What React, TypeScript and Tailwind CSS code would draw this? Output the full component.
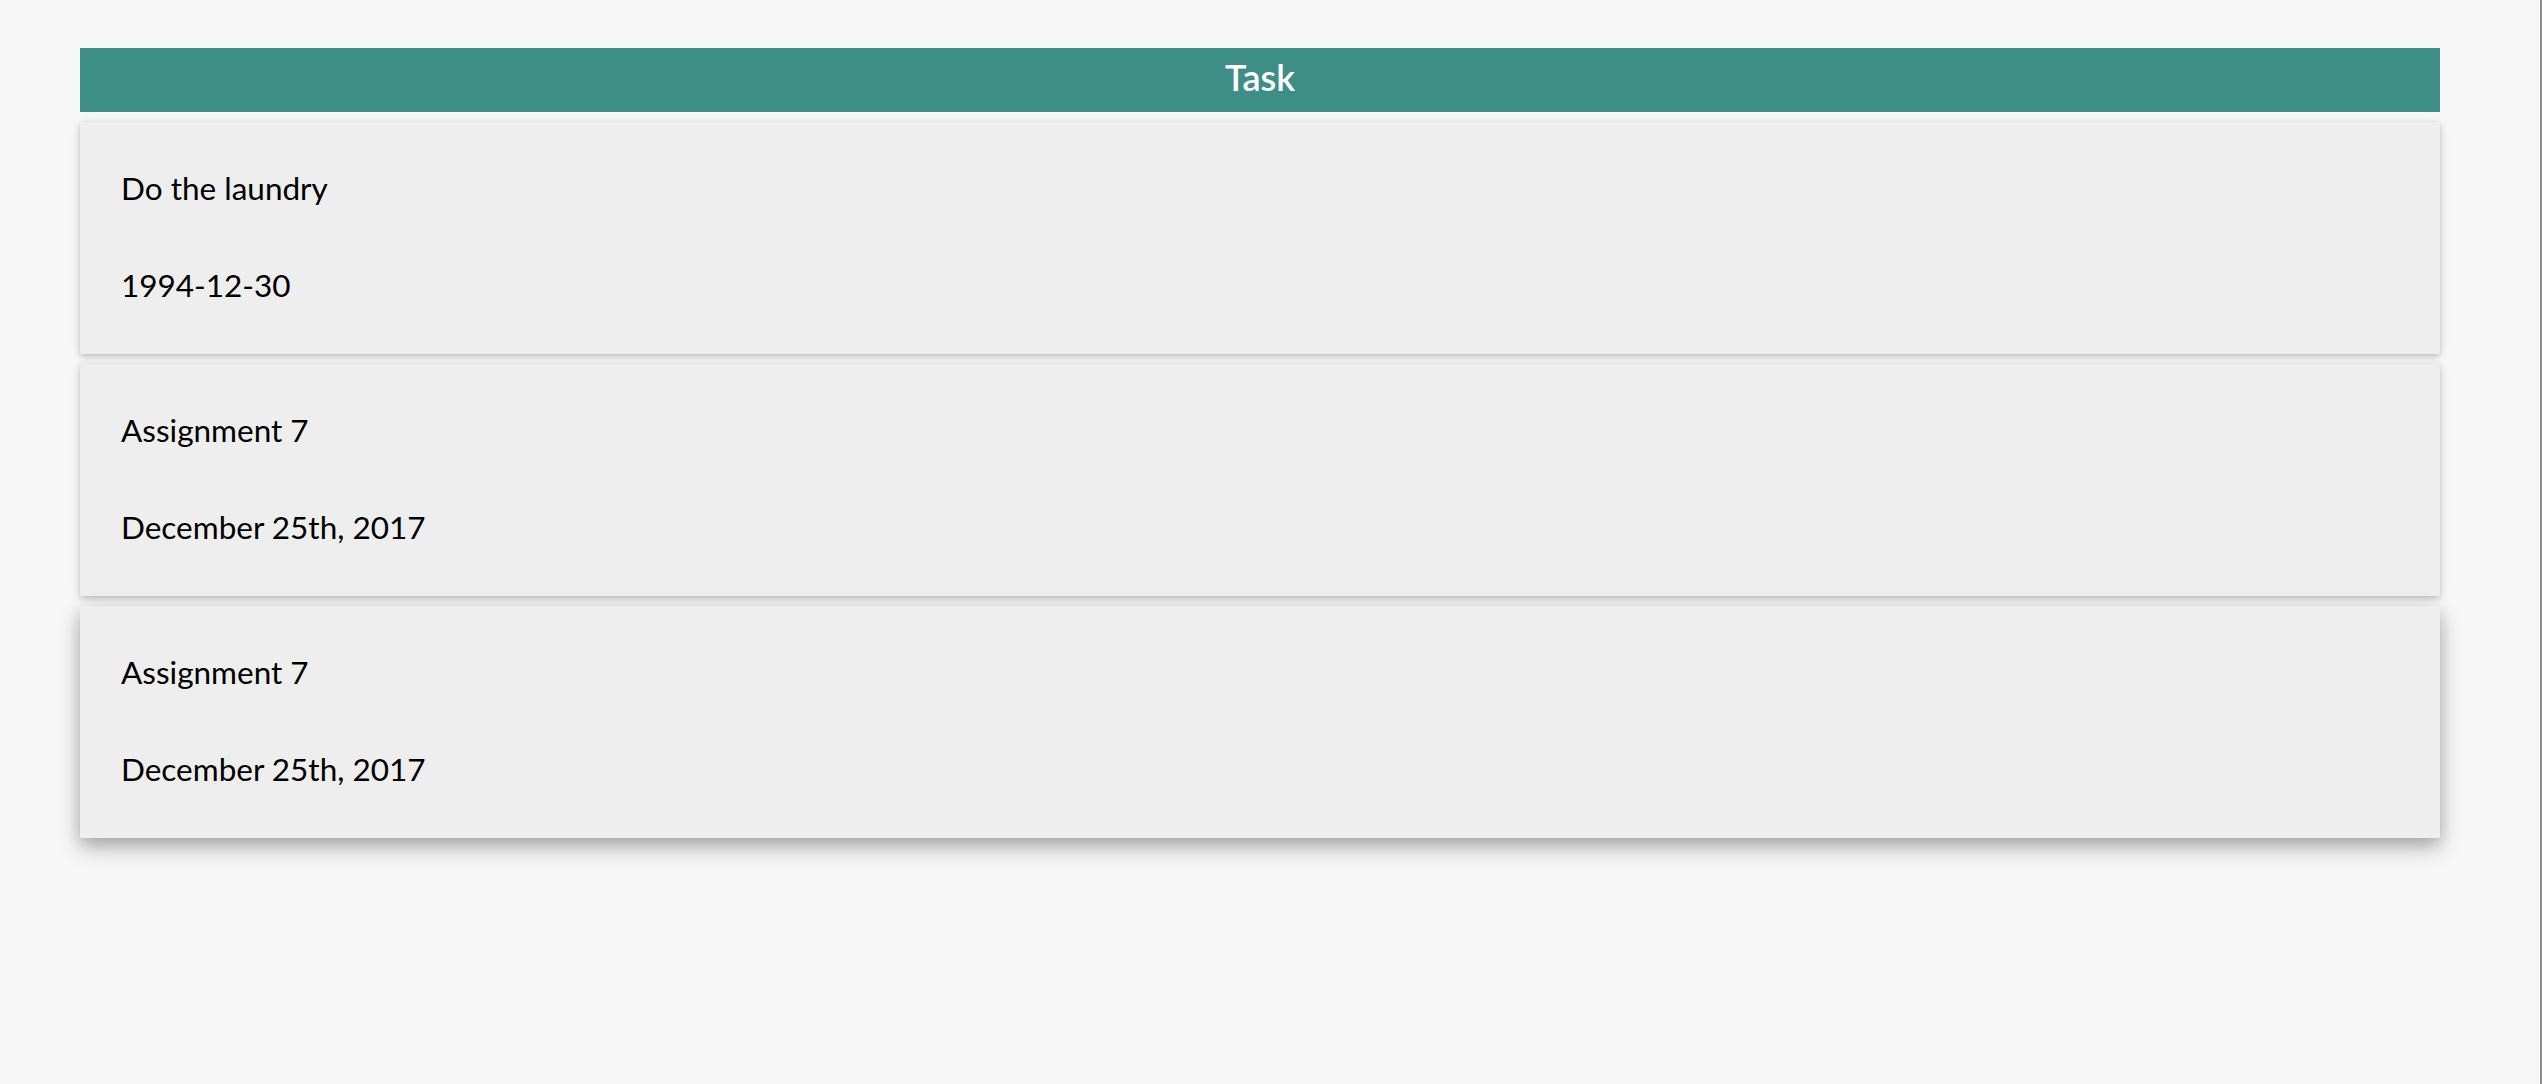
const TASKS = [
  { id: 1, title: "Do the laundry", due: "1994-12-30", raised: false },
  { id: 2, title: "Assignment 7", due: "December 25th, 2017", raised: false },
  { id: 3, title: "Assignment 7", due: "December 25th, 2017", raised: true },
];

function TaskCard({ title, due, raised }: { title: string; due: string; raised: boolean }) {
  return (
    <div
      className={[
        "h-[232px] bg-[#eeeeee] pl-[41px] pt-[42px] text-[31.5px] leading-[48px] text-black",
        raised
          ? "shadow-[0_10px_24px_0_rgba(0,0,0,0.2),0_6px_14px_0_rgba(0,0,0,0.19)]"
          : "shadow-[0_2px_5px_0_rgba(0,0,0,0.16),0_2px_10px_0_rgba(0,0,0,0.12)]",
      ].join(" ")}
    >
      <p>{title}</p>
      <p className="mt-[49px]">{due}</p>
    </div>
  );
}

export default function App() {
  return (
    <div
      className="min-h-screen w-full border-r-2 border-[#8f8f8f] bg-[#f7f7f7]"
      style={{ fontFamily: "Lato, 'Open Sans', sans-serif" }}
    >
      <div className="ml-[80px] w-[2360px] pt-[48px]">
        <div className="h-[64px] bg-[#3e8e88] text-center text-[36px] font-semibold leading-[58px] text-white">
          Task
        </div>
        <div className="mt-[10px] flex flex-col gap-[10px]">
          {TASKS.map((t) => (
            <TaskCard key={t.id} title={t.title} due={t.due} raised={t.raised} />
          ))}
        </div>
      </div>
    </div>
  );
}
